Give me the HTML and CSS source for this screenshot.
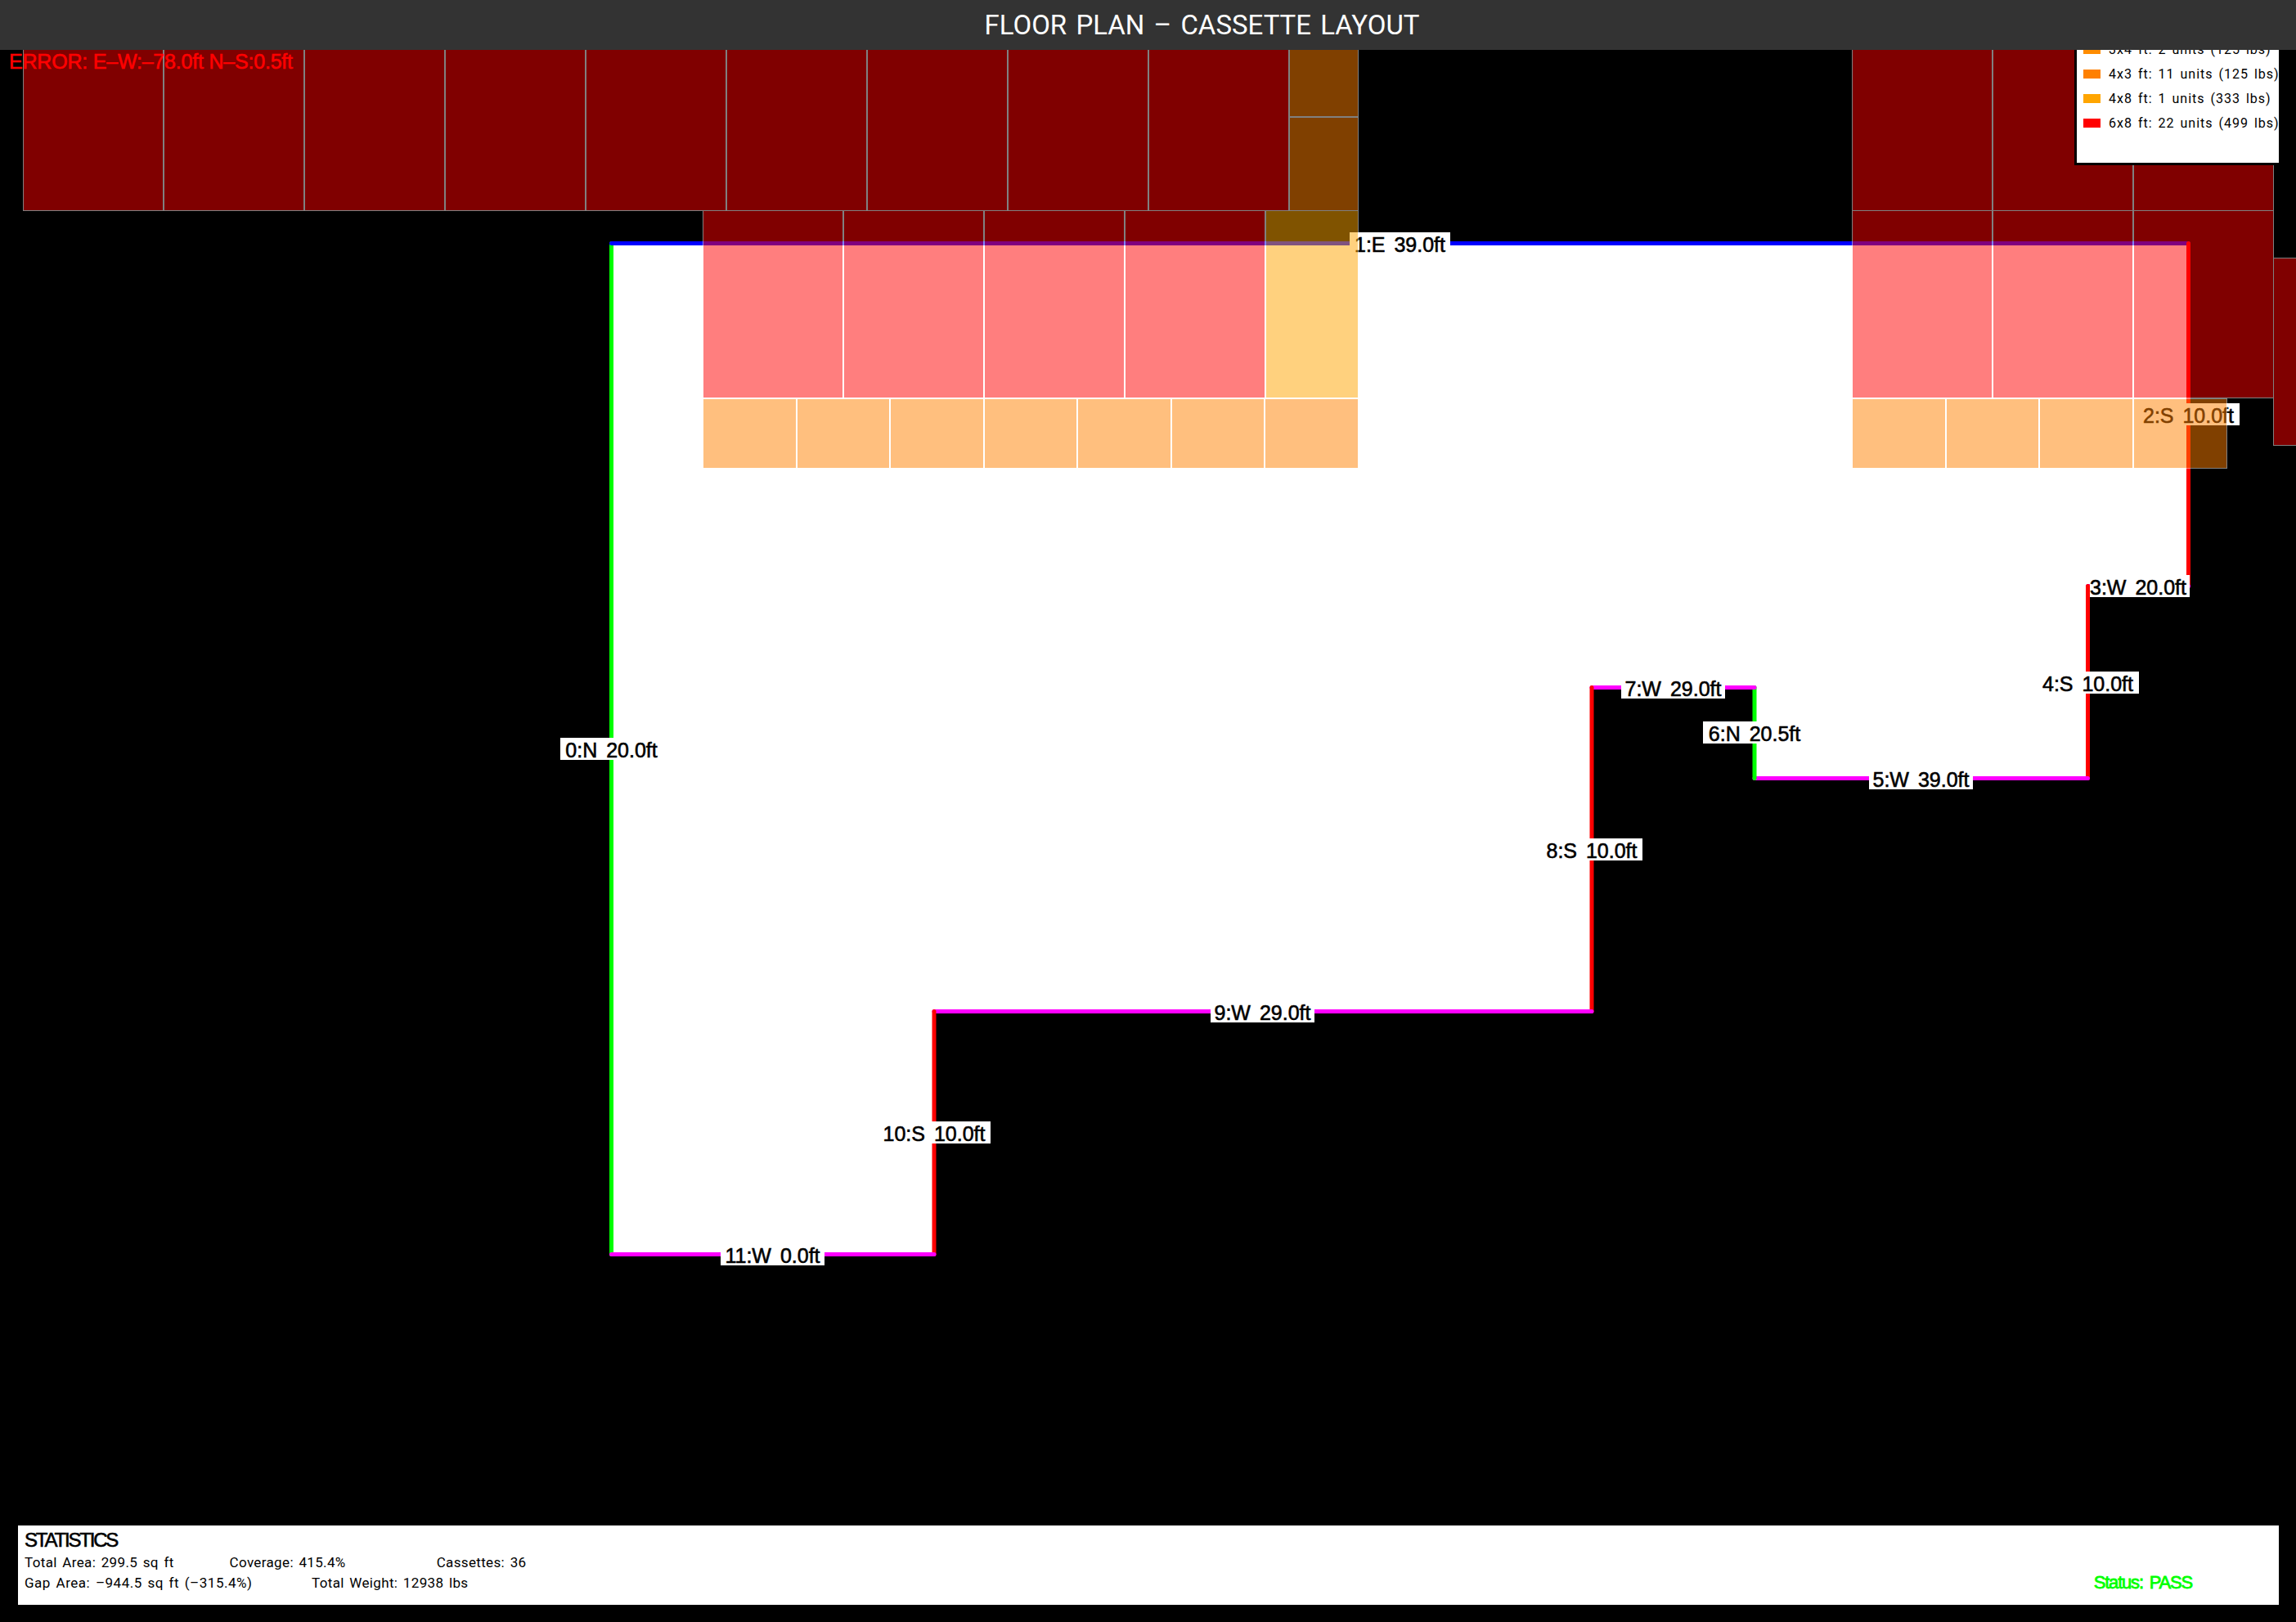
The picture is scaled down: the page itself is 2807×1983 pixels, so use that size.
FILE: index.html
```html
<!DOCTYPE html>
<html lang="en">
<head>
    <meta charset="UTF-8">
    <title>Floor Plan - Cassette Layout</title>
    <link rel="stylesheet" href="styles.css">
</head>
<body>
<div class="stage">

    <!-- Floor plan canvas, same coordinates as the page -->
    <svg class="plan" width="2807" height="1983" viewBox="0 0 2807 1983">
        <polygon class="floor" points="747.5,1533.5 747.5,297.5 2675.5,297.5 2675.5,716.5 2552.5,716.5 2552.5,951.5 2145,951.5 2145,840.5 1946,840.5 1946,1236.5 1142,1236.5 1142,1533.5"/>

        <!-- Walls, coloured by direction -->
        <line class="wall wall-n" x1="747.5" y1="1533.5" x2="747.5" y2="297.5"/>
        <line class="wall wall-e" x1="747.5" y1="297.5" x2="2675.5" y2="297.5"/>
        <line class="wall wall-s" x1="2675.5" y1="297.5" x2="2675.5" y2="716.5"/>
        <line class="wall wall-w" x1="2675.5" y1="716.5" x2="2552.5" y2="716.5"/>
        <line class="wall wall-s" x1="2552.5" y1="716.5" x2="2552.5" y2="951.5"/>
        <line class="wall wall-w" x1="2552.5" y1="951.5" x2="2145" y2="951.5"/>
        <line class="wall wall-n" x1="2145" y1="951.5" x2="2145" y2="840.5"/>
        <line class="wall wall-w" x1="2145" y1="840.5" x2="1946" y2="840.5"/>
        <line class="wall wall-s" x1="1946" y1="840.5" x2="1946" y2="1236.5"/>
        <line class="wall wall-w" x1="1946" y1="1236.5" x2="1142" y2="1236.5"/>
        <line class="wall wall-s" x1="1142" y1="1236.5" x2="1142" y2="1533.5"/>
        <line class="wall wall-w" x1="1142" y1="1533.5" x2="747.5" y2="1533.5"/>

        <!-- Wall labels -->
        <rect class="tag" x="685" y="902" width="125" height="27"/>
        <text class="tag-text" x="747.5" y="926">0:N 20.0ft</text>
        <rect class="tag" x="1650" y="284" width="123" height="27"/>
        <text class="tag-text" x="1711.5" y="308">1:E 39.0ft</text>
        <rect class="tag" x="2613" y="493" width="125" height="27"/>
        <text class="tag-text" x="2675.5" y="517">2:S 10.0ft</text>
        <rect class="tag" x="2555" y="703" width="122" height="27"/>
        <text class="tag-text" x="2614" y="727">3:W 20.0ft</text>
        <rect class="tag" x="2490" y="821" width="125" height="27"/>
        <text class="tag-text" x="2552.5" y="845">4:S 10.0ft</text>
        <rect class="tag" x="2285" y="938" width="127" height="27"/>
        <text class="tag-text" x="2348.5" y="962">5:W 39.0ft</text>
        <rect class="tag" x="2082" y="882" width="126" height="27"/>
        <text class="tag-text" x="2145" y="906">6:N 20.5ft</text>
        <rect class="tag" x="1982" y="827" width="127" height="27"/>
        <text class="tag-text" x="2045.5" y="851">7:W 29.0ft</text>
        <rect class="tag" x="1884" y="1025" width="124" height="27"/>
        <text class="tag-text" x="1946" y="1049">8:S 10.0ft</text>
        <rect class="tag" x="1480" y="1223" width="127" height="27"/>
        <text class="tag-text" x="1543.5" y="1247">9:W 29.0ft</text>
        <rect class="tag" x="1073" y="1371" width="138" height="27"/>
        <text class="tag-text" x="1142" y="1395">10:S 10.0ft</text>
        <rect class="tag" x="881" y="1520" width="127" height="27"/>
        <text class="tag-text" x="944.5" y="1544">11:W 0.0ft</text>

        <!-- Cassettes, drawn at half strength over everything above -->
        <g class="cassettes">
            <rect class="c6x8" x="28.5" y="28.5" width="171" height="229"/>
            <rect class="c6x8" x="200.5" y="28.5" width="171" height="229"/>
            <rect class="c6x8" x="372.5" y="28.5" width="171" height="229"/>
            <rect class="c6x8" x="544.5" y="28.5" width="171" height="229"/>
            <rect class="c6x8" x="716.5" y="28.5" width="171" height="229"/>
            <rect class="c6x8" x="888.5" y="28.5" width="171" height="229"/>
            <rect class="c6x8" x="1060.5" y="28.5" width="171" height="229"/>
            <rect class="c6x8" x="1232.5" y="28.5" width="171" height="229"/>
            <rect class="c6x8" x="1404.5" y="28.5" width="171" height="229"/>
            <rect class="c3x4" x="1576.5" y="28.5" width="84" height="114"/>
            <rect class="c3x4" x="1576.5" y="143.5" width="84" height="114"/>
            <rect class="c6x8" x="2264.5" y="28.5" width="171" height="229"/>
            <rect class="c6x8" x="2436.5" y="28.5" width="171" height="229"/>
            <rect class="c6x8" x="2608.5" y="28.5" width="171" height="229"/>

            <rect class="c6x8" x="859.5" y="257.5" width="171" height="229"/>
            <rect class="c6x8" x="1031.5" y="257.5" width="171" height="229"/>
            <rect class="c6x8" x="1203.5" y="257.5" width="171" height="229"/>
            <rect class="c6x8" x="1375.5" y="257.5" width="171" height="229"/>
            <rect class="c4x8" x="1547.5" y="257.5" width="113" height="229"/>
            <rect class="c6x8" x="2264.5" y="257.5" width="171" height="229"/>
            <rect class="c6x8" x="2436.5" y="257.5" width="171" height="229"/>
            <rect class="c6x8" x="2608.5" y="257.5" width="171" height="229"/>
            <rect class="c6x8" x="2779.5" y="315.5" width="171" height="229"/>

            <rect class="c4x3" x="859.5" y="487.5" width="114" height="85"/>
            <rect class="c4x3" x="974.5" y="487.5" width="113" height="85"/>
            <rect class="c4x3" x="1088.5" y="487.5" width="114" height="85"/>
            <rect class="c4x3" x="1203.5" y="487.5" width="113" height="85"/>
            <rect class="c4x3" x="1317.5" y="487.5" width="114" height="85"/>
            <rect class="c4x3" x="1432.5" y="487.5" width="113" height="85"/>
            <rect class="c4x3" x="1546.5" y="487.5" width="114" height="85"/>
            <rect class="c4x3" x="2264.5" y="487.5" width="114" height="85"/>
            <rect class="c4x3" x="2379.5" y="487.5" width="113" height="85"/>
            <rect class="c4x3" x="2493.5" y="487.5" width="114" height="85"/>
            <rect class="c4x3" x="2608.5" y="487.5" width="114" height="85"/>
        </g>
    </svg>

    <!-- Header -->
    <header class="title-bar">
        <h1>FLOOR PLAN &ndash; CASSETTE LAYOUT</h1>
    </header>

    <p class="closure-error">ERROR: E&ndash;W:&ndash;78.0ft N&ndash;S:0.5ft</p>

    <!-- Legend, its top is under the header -->
    <aside class="legend">
        <div class="legend-row"><span class="swatch swatch-3x4"></span><span>3x4 ft: 2 units (125 lbs)</span></div>
        <div class="legend-row"><span class="swatch swatch-4x3"></span><span>4x3 ft: 11 units (125 lbs)</span></div>
        <div class="legend-row"><span class="swatch swatch-4x8"></span><span>4x8 ft: 1 units (333 lbs)</span></div>
        <div class="legend-row"><span class="swatch swatch-6x8"></span><span>6x8 ft: 22 units (499 lbs)</span></div>
    </aside>

    <!-- Statistics -->
    <section class="stats">
        <h2>STATISTICS</h2>
        <div class="stats-row">
            <span class="stat-area">Total Area: 299.5 sq ft</span>
            <span class="stat-coverage">Coverage: 415.4%</span>
            <span>Cassettes: 36</span>
        </div>
        <div class="stats-row">
            <span class="stat-gap">Gap Area: &ndash;944.5 sq ft (&ndash;315.4%)</span>
            <span>Total Weight: 12938 lbs</span>
            <span class="status">Status: PASS</span>
        </div>
    </section>

</div>
</body>
</html>
```

FILE: styles.css
```css
/* General page styling */
body {
    margin: 0;
    background-color: #000;
    font-family: "Liberation Sans", Arial, sans-serif;
}

.stage {
    position: relative;
    display: flex;
    flex-direction: column;
    width: 2807px;
    height: 1983px;
    overflow: hidden;
}

/* Floor plan canvas */
.plan {
    position: absolute;
    top: 0;
    left: 0;
}

.floor {
    fill: #fff;
}

.wall {
    stroke-width: 5;
    stroke-linecap: round;
}

.wall-n { stroke: #0f0; }
.wall-e { stroke: #00f; }
.wall-s { stroke: #f00; }
.wall-w { stroke: #f0f; }

.tag {
    fill: #fff;
}

.tag-text {
    font-size: 25px;
    word-spacing: 4px;
    text-anchor: middle;
    fill: #000;
    stroke: #000;
    stroke-width: 0.6;
}

.cassettes {
    opacity: 0.5;
    shape-rendering: crispEdges;
}

.cassettes rect {
    stroke: #fff;
    stroke-width: 1;
}

.c6x8 { fill: #f00; }
.c4x8 { fill: #ffa500; }
.c4x3 { fill: #ff8000; }
.c3x4 { fill: #ff8000; }

/* Header */
.title-bar {
    position: relative;
    z-index: 2;
    flex: none;
    height: 61px;
    padding-left: 132px;
    background-color: #333;
    color: #fff;
    text-align: center;
}

.title-bar h1 {
    margin: 0;
    font-family: Roboto, sans-serif;
    font-size: 33px;
    font-weight: 400;
    line-height: 61px;
    word-spacing: 3px;
}

.closure-error {
    position: relative;
    margin: 0;
    padding: 0 0 0 11px;
    font-size: 25px;
    line-height: 28px;
    letter-spacing: -0.2px;
    color: #f00;
    -webkit-text-stroke: 0.6px #f00;
}

/* Legend */
.legend {
    position: absolute;
    z-index: 1;
    top: 32px;
    left: 2536px;
    box-sizing: border-box;
    width: 253px;
    height: 170px;
    padding: 20px 0 0 8px;
    overflow: hidden;
    background-color: #fff;
    border: 3px solid #000;
    font-family: Roboto, sans-serif;
    font-size: 16px;
    color: #000;
}

.legend-row {
    display: flex;
    align-items: center;
    gap: 10px;
    height: 11px;
    margin-bottom: 19px;
    white-space: nowrap;
    letter-spacing: 1px;
    word-spacing: 2px;
}

.swatch {
    flex: none;
    width: 21px;
    height: 11px;
}

.swatch-3x4 { background-color: #ff8c00; }
.swatch-4x3 { background-color: #ff8000; }
.swatch-4x8 { background-color: #ffa500; }
.swatch-6x8 { background-color: #f00; }

/* Statistics panel */
.stats {
    position: relative;
    box-sizing: border-box;
    height: 97px;
    margin: auto 21px 21px 22px;
    padding: 6px 8px 0;
    background-color: #fff;
    color: #000;
}

.stats h2 {
    margin: 0 0 2px;
    font-size: 24px;
    font-weight: 400;
    line-height: 24px;
    letter-spacing: -2.2px;
    -webkit-text-stroke: 0.6px #000;
}

.stats-row {
    display: flex;
    height: 25px;
    align-items: center;
    font-family: Roboto, sans-serif;
    font-size: 17px;
    letter-spacing: 0.35px;
    word-spacing: 2px;
}

.stat-area { margin-right: 68px; }
.stat-coverage { margin-right: 111px; }
.stat-gap { width: 351px; letter-spacing: 0.5px; }

.status {
    margin-left: auto;
    margin-right: 98px;
    font-family: "Liberation Sans", Arial, sans-serif;
    font-size: 22px;
    letter-spacing: -1.2px;
    word-spacing: 3px;
    color: #0f0;
    -webkit-text-stroke: 0.8px #0f0;
}
```
